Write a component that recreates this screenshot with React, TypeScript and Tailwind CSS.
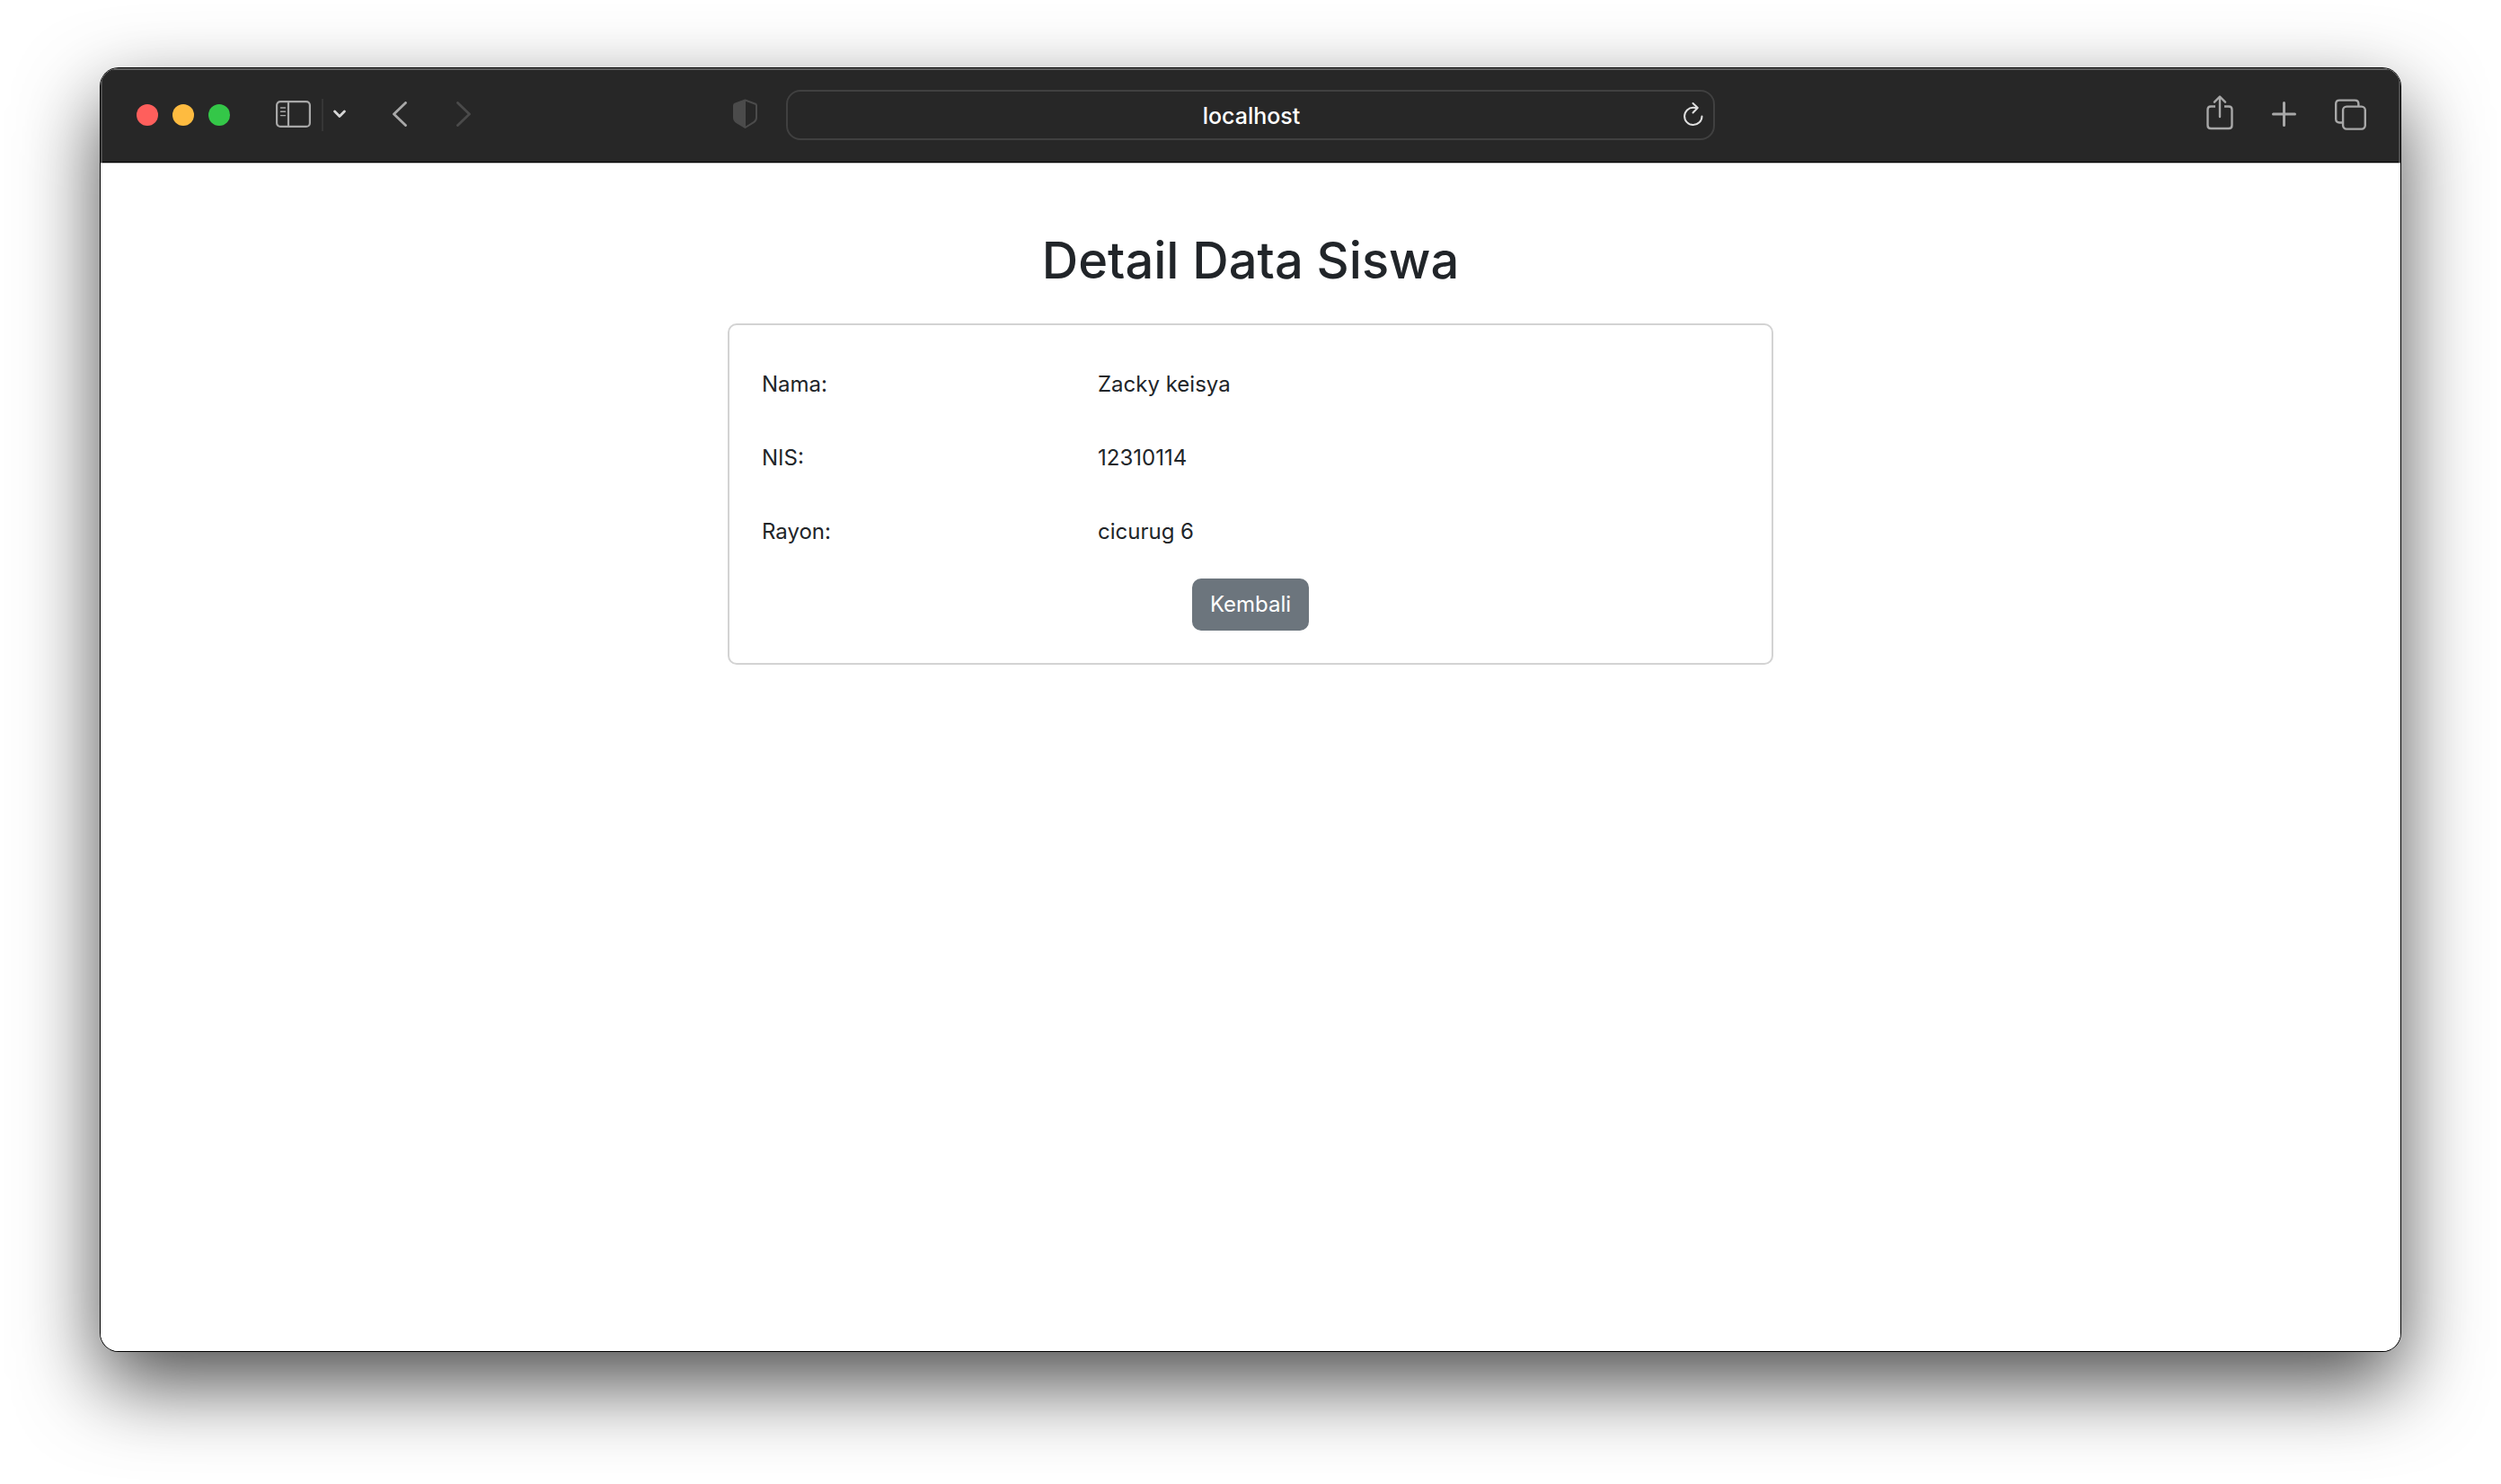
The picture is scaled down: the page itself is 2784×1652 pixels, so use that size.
import type { ReactNode } from "react";

const student = [
  { label: "Nama:", value: "Zacky keisya" },
  { label: "NIS:", value: "12310114" },
  { label: "Rayon:", value: "cicurug 6" },
];

function ToolButton({ label, className, children }: { label: string; className?: string; children: ReactNode }) {
  return (
    <button type="button" aria-label={label} className={`flex h-11 shrink-0 items-center justify-center pb-0.5 ${className ?? ""}`}>
      {children}
    </button>
  );
}

function Toolbar() {
  return (
    <header className="grid h-[106px] shrink-0 grid-cols-[763fr_1034fr_763fr] items-center border-b border-[#b4b4b4] bg-[#272727] pb-px text-[#a8a8a8] shadow-[inset_0_2px_0_#5f5f5f,inset_2px_0_0_#4a4a4a,inset_-2px_0_0_#4a4a4a,inset_0_-1px_0_#000000]">
      <div className="flex items-center pl-10">
        <div className="flex gap-4">
          <button type="button" aria-label="Close" className="size-6 rounded-full bg-[#ff5f5c]" />
          <button type="button" aria-label="Minimize" className="size-6 rounded-full bg-[#febb40]" />
          <button type="button" aria-label="Zoom" className="size-6 rounded-full bg-[#34c748]" />
        </div>
        <ToolButton label="Show sidebar" className="ml-[51px]">
          <svg width="39" height="30" viewBox="0 0 39 30" fill="none" stroke="currentColor" strokeWidth="2.200">
            <rect x="1.100" y="1.100" width="36.800" height="27.800" rx="4" />
            <path d="M14 1v28" />
            <path d="M5.500 8h5M5.500 12.300h5M5.500 16.600h5" strokeWidth="1.400" strokeLinecap="round" />
          </svg>
        </ToolButton>
        <span className="ml-3 h-9 w-0.5 bg-[#363636]" />
        <ToolButton label="Tab groups" className="ml-[11px] text-[#d6d6d6]">
          <svg width="14" height="10" viewBox="0 0 14 10" fill="none" stroke="currentColor" strokeWidth="2.800" strokeLinecap="round" strokeLinejoin="round">
            <path d="M1.600 2 7 7.500 12.400 2" />
          </svg>
        </ToolButton>
        <ToolButton label="Back" className="ml-[51px]">
          <svg width="18" height="28" viewBox="0 0 18 28" fill="none" stroke="currentColor" strokeWidth="2.800" strokeLinecap="round" strokeLinejoin="round">
            <path d="M15.500 1.400 2.500 14l13 12.600" />
          </svg>
        </ToolButton>
        <ToolButton label="Forward" className="ml-[53px] text-[#4a4a4a]">
          <svg width="18" height="28" viewBox="0 0 18 28" fill="none" stroke="currentColor" strokeWidth="2.800" strokeLinecap="round" strokeLinejoin="round">
            <path d="M2.500 1.400 15.500 14l-13 12.600" />
          </svg>
        </ToolButton>
        <ToolButton label="Privacy report" className="mr-8 ml-auto text-[#4b4b4b]">
          <svg width="27" height="34" viewBox="0 0 27 34" fill="none" stroke="currentColor" strokeWidth="2">
            <path d="M13.500 1.500 25 5.800Q26 6.200 26 7.500V21q0 3-3 5.200L13.500 32 4 26.200Q1 24 1 21V7.500Q1 6.200 2 5.800Z" strokeLinejoin="round" />
            <path d="M14 1.500V32L4 26.200Q1 24 1 21V7.500Q1 6.200 2 5.800Z" fill="currentColor" stroke="none" />
          </svg>
        </ToolButton>
      </div>

      <div className="flex h-14 items-center rounded-2xl border-2 border-[#404040] pr-2.5 pl-9">
        <input
          type="text"
          aria-label="Address"
          defaultValue="localhost"
          className="min-w-0 flex-1 bg-transparent pt-0.5 text-center text-[25px] leading-8 font-medium text-white outline-none"
        />
        <ToolButton label="Reload" className="text-[#e0e0e0]">
          <svg width="24" height="28" viewBox="0 0 24 28" fill="none" stroke="currentColor" strokeWidth="2" strokeLinecap="round" strokeLinejoin="round">
            <path d="M21.500 16.500A9.700 9.700 0 1 1 12 6.700q2 0 4 .5" />
            <path d="m11.500 2 5.300 5-5.300 5.500" />
          </svg>
        </ToolButton>
      </div>

      <div className="flex items-center justify-end gap-[43px] pr-[38px]">
        <ToolButton label="Share">
          <svg width="30" height="42" viewBox="0 0 30 42" fill="none" stroke="currentColor" strokeWidth="2.400" strokeLinecap="round" strokeLinejoin="round">
            <path d="M10 12.500H5q-3.500 0-3.500 3.500V33.500q0 3.500 3.500 3.500h20q3.500 0 3.500-3.500V16q0-3.500-3.500-3.500h-5" strokeLinecap="butt" />
            <path d="M15 24V2M9 7.700 15 1.500l6 6.200" />
          </svg>
        </ToolButton>
        <ToolButton label="New tab">
          <svg width="27" height="28" viewBox="0 0 27 28" fill="none" stroke="currentColor" strokeWidth="3" strokeLinecap="round">
            <path d="M13.500 1.500v25M1.500 14h24" />
          </svg>
        </ToolButton>
        <ToolButton label="Show all tabs">
          <svg width="35" height="35" viewBox="0 0 35 35" fill="none" stroke="currentColor" strokeWidth="2.400">
            <rect x="9.100" y="8.600" width="24.700" height="25" rx="4" />
            <path d="M9 26.500H5.200q-4 0-4-4V5.600q0-4 4-4h17.200q4 0 4 4v3" />
          </svg>
        </ToolButton>
      </div>
    </header>
  );
}

export default function App() {
  return (
    <div className="flex min-h-screen flex-col bg-white px-28 pt-[76px] pb-[148px] font-['Inter','Liberation_Sans',sans-serif]">
      <div className="flex flex-1 flex-col rounded-[20px] shadow-[0_0_0_1px_#000000,0_36px_90px_rgba(0,0,0,0.7)]">
        <div className="flex flex-1 flex-col overflow-hidden rounded-[20px] bg-white">
          <Toolbar />
          <main className="flex flex-1 flex-col items-center px-6 pt-[72px] text-[#212529]">
            <h1 className="text-center text-[56px] leading-[72px] font-medium">Detail Data Siswa</h1>
            <section className="mt-[34px] flex w-full max-w-[1164px] flex-col rounded-[10px] border-2 border-[#d3d3d3] px-4 pt-12 pb-9">
              <dl className="flex flex-col gap-[46px] text-[24px] leading-9">
                {student.map((row) => (
                  <div key={row.label} className="grid grid-cols-3">
                    <dt className="px-5">{row.label}</dt>
                    <dd className="col-span-2 px-[18px]">{row.value}</dd>
                  </div>
                ))}
              </dl>
              <button type="button" className="mt-[34px] self-center rounded-[10px] bg-[#6c757d] px-5 py-[11px] text-[24px] leading-9 text-white">
                Kembali
              </button>
            </section>
          </main>
        </div>
      </div>
    </div>
  );
}
